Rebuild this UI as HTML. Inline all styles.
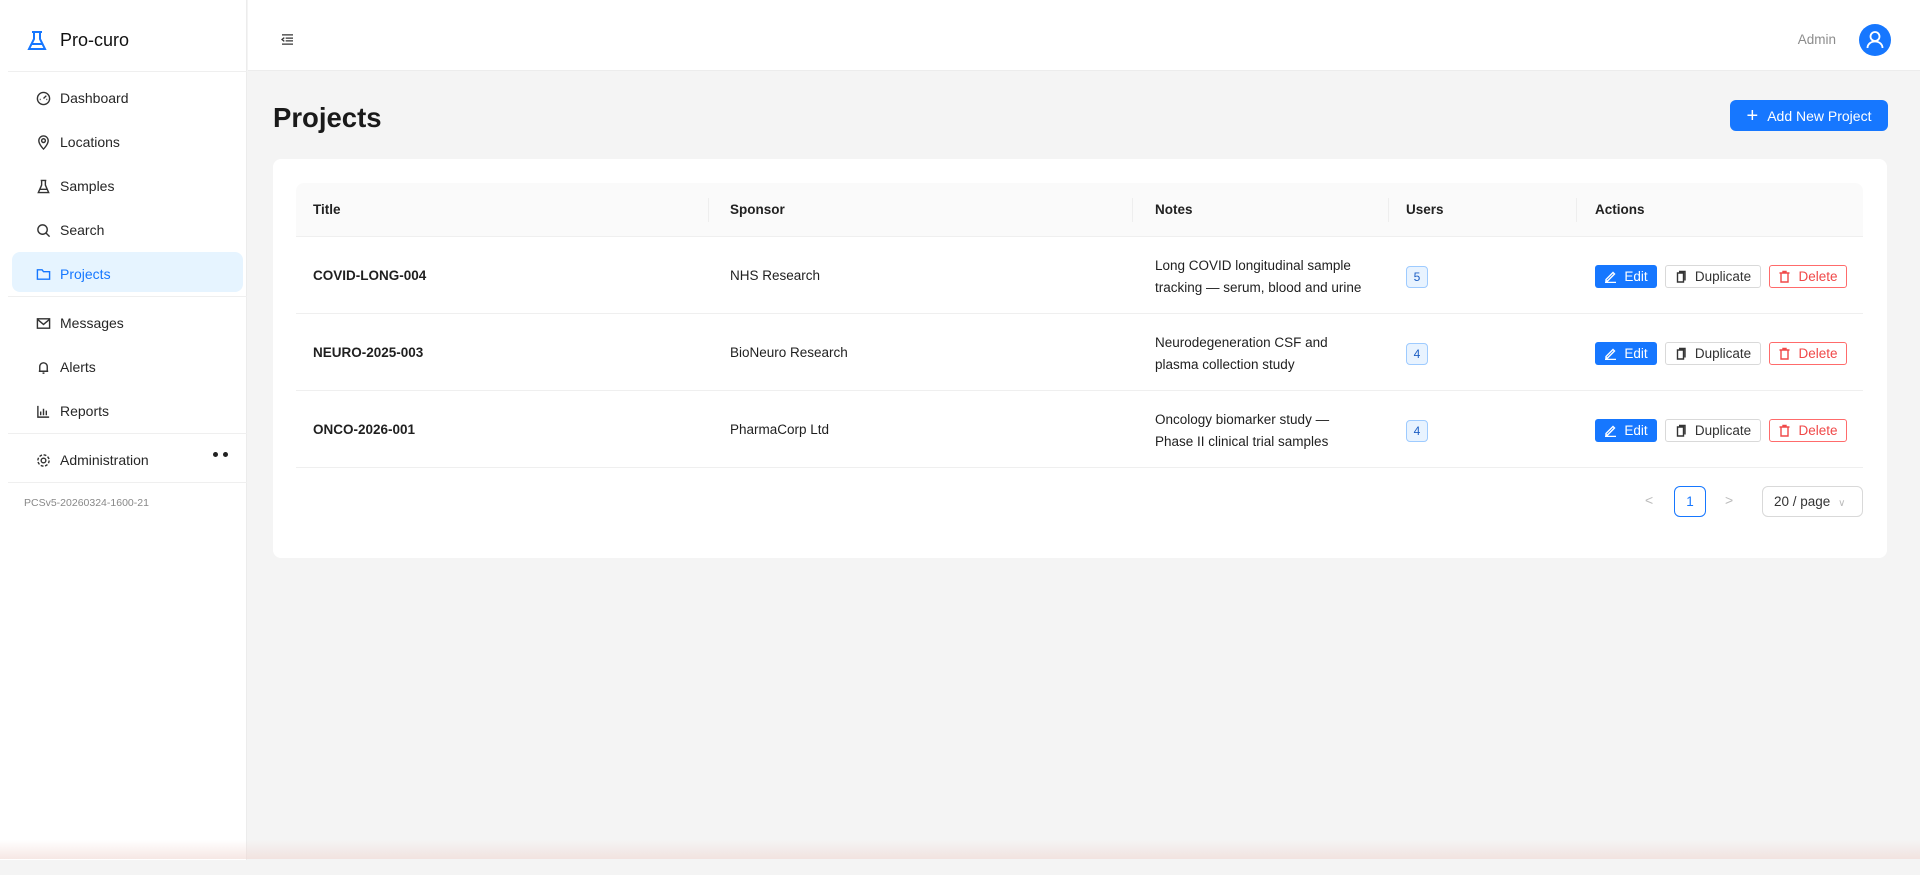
<!DOCTYPE html>
<html><head><meta charset="utf-8"><style>
*{box-sizing:border-box;margin:0;padding:0}
body{width:1920px;height:875px;overflow:hidden;background:#f4f4f4;font-family:"Liberation Sans",sans-serif;color:#1f1f1f;font-size:13.5px;position:relative}
.sb{position:absolute;left:0;top:0;width:247px;height:860px;background:#fff;border-right:1px solid #ececec}
.hdr{position:absolute;left:248px;top:0;right:0;height:71px;background:#fff;border-bottom:1px solid #ececec}
.abs{position:absolute}
.mi{position:absolute;left:36px;display:flex;align-items:center;font-size:14px;color:#262626}
.mi svg{width:15px;height:15px;margin-right:9px;stroke:#333;fill:none;stroke-width:1.5}
.div{position:absolute;left:8px;width:239px;height:1px;background:#efefef}
.card{position:absolute;left:273px;top:159px;width:1614px;height:399px;background:#fff;border-radius:8px}
.th{position:absolute;left:296px;top:183px;width:1567px;height:54px;background:#fafafa;border-bottom:1px solid #efefef;border-radius:8px 8px 0 0}
.th span{position:absolute;top:19px;font-weight:bold;font-size:13.5px;color:#222}
.sep{position:absolute;top:15px;width:1px;height:24px;background:#eee}
.row{position:absolute;left:296px;width:1567px;height:77px;border-bottom:1px solid #efefef}
.row .t{position:absolute;left:17px;top:31px;font-weight:bold}
.row .s{position:absolute;left:434px;top:31px}
.row .n{position:absolute;left:859px;top:18px;line-height:22px;width:240px;white-space:nowrap}
.badge{position:absolute;left:1110px;top:29px;width:22px;height:22px;border:1px solid #9ecbff;background:#e8f3ff;border-radius:4px;color:#1d5fc4;font-size:12px;text-align:center;line-height:20px}
.btn{position:absolute;top:28px;height:23px;border-radius:3px;font-size:13.5px;display:flex;align-items:center;justify-content:center;gap:7px}
.edit{left:1299px;width:62px;background:#1677ff;color:#fff}
.dup{left:1369px;width:96px;border:1px solid #d9d9d9;color:#333}
.del{left:1473px;width:78px;border:1px solid #ff6b6b;color:#f04848}
.btn svg{width:13px;height:13px;fill:none;stroke-width:1.4}
</style></head><body>
<div class="sb">
 <svg class="abs" style="left:26px;top:30px" width="22" height="22" viewBox="0 0 22 22" fill="none" stroke="#1677ff" stroke-width="2"><path d="M6 2h10M8 2v7L3 19h16L14 9V2M6 14h10"/></svg>
 <div class="abs" style="left:60px;top:30px;font-size:18px;color:#111">Pro-curo</div>
 <div class="div" style="top:71px"></div>
 <div class="mi" style="top:90px"><svg viewBox="0 0 16 16"><circle cx="8" cy="8" r="6.5"/><path d="M8 8l3-3M4 9h1M11 9h1"/></svg>Dashboard</div>
 <div class="mi" style="top:134px"><svg viewBox="0 0 16 16"><path d="M8 15s5-5 5-9a5 5 0 0 0-10 0c0 4 5 9 5 9z"/><circle cx="8" cy="6" r="2"/></svg>Locations</div>
 <div class="mi" style="top:178px"><svg viewBox="0 0 16 16"><path d="M5 1.5h6M6 1.5v5L2.5 14.5h11L10 6.5v-5M4 11h8"/></svg>Samples</div>
 <div class="mi" style="top:222px"><svg viewBox="0 0 16 16"><circle cx="7" cy="7" r="5"/><path d="M10.5 10.5l4 4"/></svg>Search</div>
 <div class="abs" style="left:12px;top:252px;width:231px;height:40px;background:#e6f4ff;border-radius:8px"></div>
 <div class="mi" style="top:266px;color:#1677ff"><svg viewBox="0 0 16 16" style="stroke:#1677ff"><path d="M1.5 3h5l1.5 2h6.5v8h-13z"/></svg>Projects</div>
 <div class="div" style="top:296px"></div>
 <div class="mi" style="top:315px"><svg viewBox="0 0 16 16"><rect x="1.5" y="3" width="13" height="10"/><path d="M1.5 3.5L8 9l6.5-5.5"/></svg>Messages</div>
 <div class="mi" style="top:359px"><svg viewBox="0 0 16 16"><path d="M4 12V7a4 4 0 0 1 8 0v5zM3 12h10M7 14h2"/></svg>Alerts</div>
 <div class="mi" style="top:403px"><svg viewBox="0 0 16 16"><path d="M2 2v12h12M5 12V8M8 12V5M11 12V7"/></svg>Reports</div>
 <div class="div" style="top:433px"></div>
 <div class="mi" style="top:452px"><svg viewBox="0 0 16 16"><circle cx="8" cy="8" r="2.5"/><circle cx="8" cy="8" r="6" stroke-dasharray="3 1.7"/></svg>Administration</div>
 <div class="abs" style="left:213px;top:452px;width:5px;height:5px;border-radius:50%;background:#222"></div>
 <div class="abs" style="left:223px;top:452px;width:5px;height:5px;border-radius:50%;background:#222"></div>
 <div class="div" style="top:482px"></div>
 <div class="abs" style="left:24px;top:497px;font-size:10.5px;color:#888">PCSv5-20260324-1600-21</div>
</div>
<div class="hdr">
 <svg class="abs" style="left:33px;top:34px" width="13" height="11" viewBox="0 0 14 12" stroke="#333" stroke-width="1.4" fill="none"><path d="M1 1h12M5 4.5h8M5 7.5h8M1 11h12M3.5 4L1 6l2.5 2"/></svg>
 <div class="abs" style="right:84px;top:32px;font-size:13.5px;color:#8c8c8c">Admin</div>
 <div class="abs" style="right:29px;top:24px;width:32px;height:32px;border-radius:50%;background:#1677ff"><svg width="32" height="32" viewBox="0 0 32 32" fill="none" stroke="#fff" stroke-width="1.8"><circle cx="16" cy="12.5" r="4.5"/><path d="M8.5 24c0-4 3.5-6.5 7.5-6.5s7.5 2.5 7.5 6.5"/></svg></div>
</div>
<div class="abs" style="left:273px;top:102px;font-size:27.5px;font-weight:bold;color:#1a1a1a">Projects</div>
<div class="abs" style="left:1730px;top:100px;width:158px;height:31px;background:#1677ff;border-radius:6px;color:#fff;font-size:14px;display:flex;align-items:center;justify-content:center;gap:9px"><span style="font-size:20px;line-height:1">+</span>Add New Project</div>
<div class="card"></div>
<div class="th"><span style="left:17px">Title</span><div class="sep" style="left:412px"></div><span style="left:434px">Sponsor</span><div class="sep" style="left:836px"></div><span style="left:859px">Notes</span><div class="sep" style="left:1092px"></div><span style="left:1110px">Users</span><div class="sep" style="left:1280px"></div><span style="left:1299px">Actions</span></div>
<div class="row" style="top:237px"><div class="t">COVID-LONG-004</div><div class="s">NHS Research</div><div class="n">Long COVID longitudinal sample<br>tracking — serum, blood and urine</div><div class="badge">5</div>
<div class="btn edit"><svg viewBox="0 0 13 13" stroke="#fff"><path d="M2 9.5L9 2.5l1.5 1.5-7 7H2zM1 12.5h11"/></svg>Edit</div><div class="btn dup"><svg viewBox="0 0 13 13" stroke="#333"><path d="M4 1.5h6v9M2.5 3h6v9h-6z"/></svg>Duplicate</div><div class="btn del"><svg viewBox="0 0 13 13" stroke="#f04848"><path d="M1.5 3h10M5 3V1.5h3V3M3 3v9h7V3"/></svg>Delete</div></div>
<div class="row" style="top:314px"><div class="t">NEURO-2025-003</div><div class="s">BioNeuro Research</div><div class="n">Neurodegeneration CSF and<br>plasma collection study</div><div class="badge">4</div>
<div class="btn edit"><svg viewBox="0 0 13 13" stroke="#fff"><path d="M2 9.5L9 2.5l1.5 1.5-7 7H2zM1 12.5h11"/></svg>Edit</div><div class="btn dup"><svg viewBox="0 0 13 13" stroke="#333"><path d="M4 1.5h6v9M2.5 3h6v9h-6z"/></svg>Duplicate</div><div class="btn del"><svg viewBox="0 0 13 13" stroke="#f04848"><path d="M1.5 3h10M5 3V1.5h3V3M3 3v9h7V3"/></svg>Delete</div></div>
<div class="row" style="top:391px"><div class="t">ONCO-2026-001</div><div class="s">PharmaCorp Ltd</div><div class="n">Oncology biomarker study —<br>Phase II clinical trial samples</div><div class="badge">4</div>
<div class="btn edit"><svg viewBox="0 0 13 13" stroke="#fff"><path d="M2 9.5L9 2.5l1.5 1.5-7 7H2zM1 12.5h11"/></svg>Edit</div><div class="btn dup"><svg viewBox="0 0 13 13" stroke="#333"><path d="M4 1.5h6v9M2.5 3h6v9h-6z"/></svg>Duplicate</div><div class="btn del"><svg viewBox="0 0 13 13" stroke="#f04848"><path d="M1.5 3h10M5 3V1.5h3V3M3 3v9h7V3"/></svg>Delete</div></div>
<div class="abs" style="left:1645px;top:492px;color:#bbb;font-size:14px">&lt;</div>
<div class="abs" style="left:1674px;top:486px;width:32px;height:31px;border:1px solid #1677ff;border-radius:6px;color:#1677ff;text-align:center;line-height:29px">1</div>
<div class="abs" style="left:1725px;top:492px;color:#bbb;font-size:14px">&gt;</div>
<div class="abs" style="left:1762px;top:486px;width:101px;height:31px;border:1px solid #d9d9d9;border-radius:6px;padding-left:11px;line-height:29px;color:#333">20 / page <span style="color:#bbb;font-size:10px;margin-left:4px">&#8744;</span></div>
<div class="abs" style="left:0;top:840px;width:1920px;height:19px;background:linear-gradient(rgba(255,240,235,0),rgba(240,215,210,.6))"></div>
</body></html>
